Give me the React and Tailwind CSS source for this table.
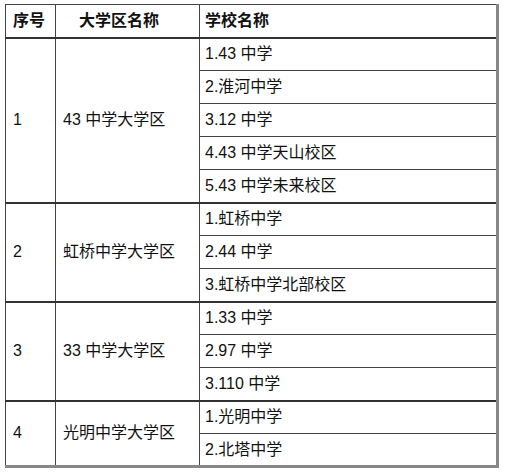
const groups = [
  { no: "1", name: "43 中学大学区", schools: ["1.43 中学", "2.淮河中学", "3.12 中学", "4.43 中学天山校区", "5.43 中学未来校区"] },
  { no: "2", name: "虹桥中学大学区", schools: ["1.虹桥中学", "2.44 中学", "3.虹桥中学北部校区"] },
  { no: "3", name: "33 中学大学区", schools: ["1.33 中学", "2.97 中学", "3.110 中学"] },
  { no: "4", name: "光明中学大学区", schools: ["1.光明中学", "2.北塔中学"] },
];

export default function App() {
  return (
    <div className="w-[505px] h-[473px] bg-white pl-[5px] pt-[4px] font-['Liberation_Sans','Noto_Sans_CJK_SC',sans-serif] text-[#111]">
      <table className="w-[494px] border-collapse table-fixed border-l border-t border-[#333] border-r-[3px] border-r-[#888] border-b-[3px] border-b-[#888]">
        <colgroup>
          <col className="w-[50px]" />
          <col className="w-[144px]" />
          <col />
        </colgroup>
        <thead>
          <tr className="h-[33px]">
            <th className="border border-[#444] text-left pl-[7px] text-[16px] font-bold">序号</th>
            <th className="border border-[#444] text-left pl-[23px] text-[16px] font-bold">大学区名称</th>
            <th className="border border-[#444] border-r-[3px] border-r-[#888] text-left pl-[5px] text-[16px] font-bold">学校名称</th>
          </tr>
        </thead>
        <tbody>
          {groups.map((g) =>
            g.schools.map((s, i) => (
              <tr key={g.no + s} className={`h-[33px] ${i === 0 ? "border-t-2 border-[#333]" : ""}`}>
                {i === 0 && (
                  <>
                    <td rowSpan={g.schools.length} className="border border-[#444] border-t-2 border-t-[#333] pl-[7px] text-[16px]">
                      {g.no}
                    </td>
                    <td rowSpan={g.schools.length} className="border border-[#444] border-t-2 border-t-[#333] pl-[7px] text-[16px]">
                      {g.name}
                    </td>
                  </>
                )}
                <td className={`border border-[#444] border-r-[3px] border-r-[#888] pl-[5px] text-[16px] ${i === 0 ? "border-t-2 border-t-[#333]" : ""}`}>
                  {s}
                </td>
              </tr>
            ))
          )}
        </tbody>
      </table>
    </div>
  );
}
